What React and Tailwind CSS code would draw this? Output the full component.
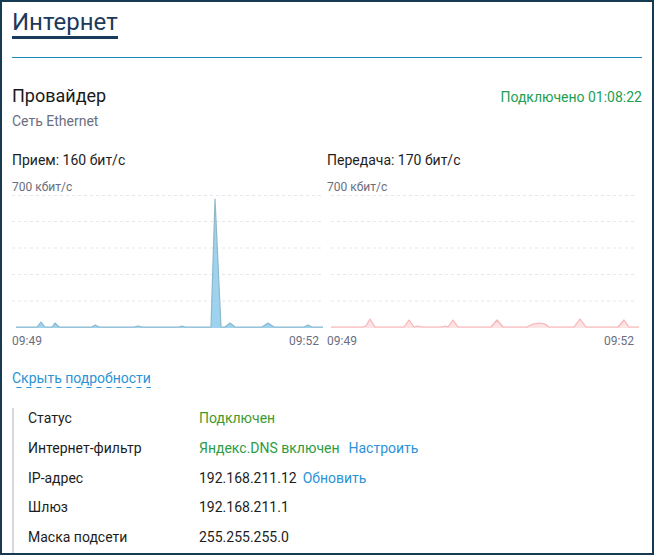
import React from "react";

const leftPts = [
  [4, 132], [25, 132], [29, 127], [33, 132], [40, 132], [43, 128], [47, 132],
  [80, 132], [83, 130], [87, 132], [122, 132], [126, 131], [130, 132],
  [167, 132], [170, 131], [173, 132], [199, 132], [203, 4], [209, 132],
  [213, 132], [218, 128], [223, 132], [250, 132], [256, 128], [262, 132],
  [292, 132], [296, 130], [300, 132], [311, 132],
];

const rightPts = [
  [4, 132], [36, 132], [39, 131], [43, 124], [48, 132], [77, 132], [82, 125],
  [87, 132], [90, 131], [96, 132], [115, 132], [118, 131], [121, 132],
  [126, 125], [131, 132], [164, 132], [170, 125], [176, 132], [200, 132],
  [206, 129], [212, 128], [218, 129], [222, 132], [247, 132], [253, 124],
  [259, 132], [291, 132], [297, 125], [302, 132], [312, 132],
];

function Chart({ pts, fill, stroke, gx1, gx2 }) {
  const line = pts.map((p) => p.join(",")).join(" ");
  const area = `${pts[0][0]},133 ${line} ${pts[pts.length - 1][0]},133`;
  const grid = [0.5, 26.5, 53, 79.5, 106];
  return (
    <svg width="307" height="134" className="block overflow-visible">
      {grid.map((y) => (
        <line key={y} x1={gx1} x2={gx2} y1={y} y2={y} stroke="#e6e7ee" strokeWidth="1" strokeDasharray="3 3" />
      ))}
      <polygon points={area} fill={fill} />
      <polyline points={line} fill="none" stroke={stroke} strokeWidth="1.2" strokeLinejoin="round" />
    </svg>
  );
}

function ChartCol({ title, pts, fill, stroke, gx1, gx2 }) {
  return (
    <div className="pr-[8px]">
      <div className="text-[14px] leading-[20px] text-[#1d1d1d]">{title}</div>
      <div className="mt-[8.6px] text-[12px] leading-[16px] text-[#6b6d80]">700 кбит/с</div>
      <Chart pts={pts} fill={fill} stroke={stroke} gx1={gx1} gx2={gx2} />
      <div className="mt-[4px] flex justify-between text-[12px] leading-[16px] text-[#6b6d80]">
        <span>09:49</span>
        <span>09:52</span>
      </div>
    </div>
  );
}

export default function App() {
  const rows = [
    ["Статус", <span className="text-[#3f9a2e]">Подключен</span>],
    [
      "Интернет-фильтр",
      <>
        <span className="text-[#2e9b45]">Яндекс.DNS включен</span>
        <span className="ml-[9px] text-[#2b93d6]">Настроить</span>
      </>,
    ],
    [
      "IP-адрес",
      <>
        <span>192.168.211.12</span>
        <span className="ml-[6px] text-[#2b93d6]">Обновить</span>
      </>,
    ],
    ["Шлюз", <span>192.168.211.1</span>],
    ["Маска подсети", <span>255.255.255.0</span>],
  ];
  return (
    <div
      className="w-[654px] h-[555px] box-border border-2 border-[#153a52] bg-white px-[10px] pt-[6px] overflow-hidden"
      style={{ fontFamily: "Roboto, 'Liberation Sans', sans-serif" }}
    >
      <div className="inline-block border-b-[3px] border-[#173c5b] text-[24px] leading-[28px] text-[#1b3a5c]">
        Интернет
      </div>
      <div className="mt-[18px] h-px bg-[#1b8ac0]" />

      <div className="mt-[26px] flex items-baseline justify-between">
        <div>
          <div className="text-[18px] leading-[24px] text-[#1a1a1a]">Провайдер</div>
          <div className="mt-[3px] text-[14px] leading-[20px] text-[#6b6f80]">Сеть Ethernet</div>
        </div>
        <div className="text-[14px] leading-[20px] text-[#21a052]">Подключено 01:08:22</div>
      </div>

      <div className="mt-[19px] grid grid-cols-2">
        <ChartCol title="Прием: 160 бит/с" pts={leftPts} fill="#9dd3ee" stroke="#8fb8cc" gx1={0} gx2={311} />
        <ChartCol title="Передача: 170 бит/с" pts={rightPts} fill="#fde3e4" stroke="#f6b4b6" gx1={4} gx2={307} />
      </div>

      <div className="mt-[17px]">
        <span className="inline-block pb-[1px] text-[14px] leading-[18px] text-[#2b93d6] bg-[linear-gradient(to_right,#2b93d6_55%,transparent_55%)] bg-[length:10px_1px] bg-repeat-x bg-bottom">
          Скрыть подробности
        </span>
      </div>

      <div className="mt-[20px] border-l-2 border-[#d5d8de] pl-[14px] pb-[20px]">
        <div className="-mt-[1.5px] flex flex-col gap-[9.8px] text-[14px] leading-[20px] text-[#1d1d1d]">
          {rows.map(([label, value]) => (
            <div key={label} className="flex">
              <div className="w-[171px] shrink-0">{label}</div>
              <div className="flex">{value}</div>
            </div>
          ))}
        </div>
      </div>
    </div>
  );
}
